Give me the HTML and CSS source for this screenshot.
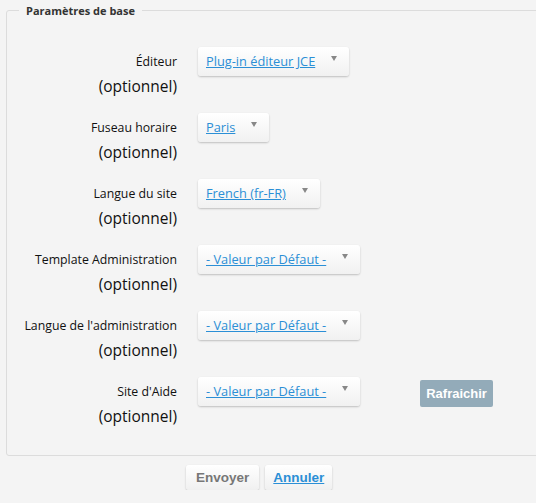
FILE: index.html
```html
<!DOCTYPE html>
<html>
<head>
  <title>Paramètres de base</title>
  <link rel="stylesheet" href="styles.css">
</head>
<body>

  <form class="settings" onsubmit="return false;">
    <fieldset class="group">
      <legend>Paramètres de base</legend>

      <div class="row">
        <label class="field-label">Éditeur<span class="opt">(optionnel)</span></label>
        <a class="picker" href="#">Plug-in éditeur JCE</a>
      </div>

      <div class="row">
        <label class="field-label">Fuseau horaire<span class="opt">(optionnel)</span></label>
        <a class="picker" href="#">Paris</a>
      </div>

      <div class="row">
        <label class="field-label">Langue du site<span class="opt">(optionnel)</span></label>
        <a class="picker" href="#">French (fr-FR)</a>
      </div>

      <div class="row">
        <label class="field-label">Template Administration<span class="opt">(optionnel)</span></label>
        <a class="picker" href="#">- Valeur par Défaut -</a>
      </div>

      <div class="row">
        <label class="field-label">Langue de l'administration<span class="opt">(optionnel)</span></label>
        <a class="picker" href="#">- Valeur par Défaut -</a>
      </div>

      <div class="row">
        <label class="field-label">Site d'Aide<span class="opt">(optionnel)</span></label>
        <a class="picker" href="#">- Valeur par Défaut -</a>
        <button type="button" class="refresh">Rafraichir</button>
      </div>
    </fieldset>

    <div class="actions">
      <button type="submit" class="btn">Envoyer</button>
      <button type="button" class="btn btn-link">Annuler</button>
    </div>
  </form>

</body>
</html>
```

FILE: styles.css
```css
body {
  background-color: #f4f4f4;
  color: #1a1a1a;
  font-family: "Open Sans", sans-serif;
  margin: 0;
  overflow: hidden;
}

.settings {
  padding-top: 3px;
}

.group {
  margin: 0 -20px 0 6px;
  padding: 29px 0 12px 0;
  border: 1px solid #dcdcdc;
  border-radius: 3px;
  box-sizing: border-box;
}

.group legend {
  margin-left: 12px;
  padding: 0 7px;
  font-size: 11px;
  font-weight: bold;
  color: #333;
}

.row {
  display: flex;
  align-items: flex-start;
  height: 66px;
}

.field-label {
  width: 170px;
  text-align: right;
  font-size: 12.3px;
  line-height: 29px;
  color: #111;
}

.opt {
  display: block;
  font-size: 15.5px;
  line-height: 20px;
}

.picker {
  position: relative;
  margin-left: 21px;
  height: 29px;
  line-height: 29px;
  padding: 0 34px 0 8px;
  font-size: 12.8px;
  color: #2b8fd6;
  background: linear-gradient(#ffffff, #f1f1f1);
  border-radius: 3px;
  box-shadow: 0 1px 2px rgba(0, 0, 0, 0.22);
}

.picker::after {
  content: "";
  position: absolute;
  right: 12px;
  top: 9px;
  border-left: 3.5px solid transparent;
  border-right: 3.5px solid transparent;
  border-top: 5px solid #888;
}

.refresh {
  margin: 3px 0 0 60px;
  height: 27px;
  padding: 0 6px;
  border: none;
  border-radius: 2px;
  background-color: #93abb9;
  color: white;
  font-family: "Liberation Sans", sans-serif;
  font-size: 13px;
  font-weight: bold;
}

.actions {
  display: flex;
  gap: 6px;
  margin: 9px 0 0 186px;
}

.btn {
  height: 25px;
  padding: 0 10px;
  border: none;
  border-radius: 3px;
  background: linear-gradient(#ffffff, #f0f0f0);
  box-shadow: 0 1px 2px rgba(0, 0, 0, 0.22);
  color: #777;
  font-family: "Liberation Sans", sans-serif;
  font-size: 13.5px;
  font-weight: bold;
}

.btn-link {
  padding: 0 8px;
  color: #2b8fd6;
  text-decoration: underline;
}
```
